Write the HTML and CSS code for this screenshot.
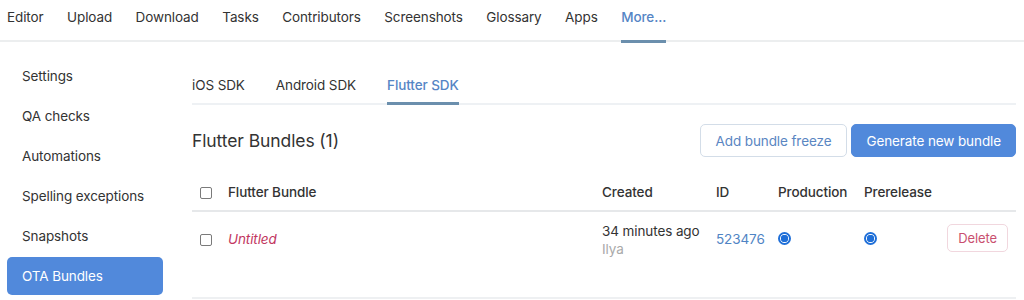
FILE: index.html
```html
<!doctype html>
<html lang="en">
  <head>
    <meta charset="UTF-8" />
    <meta name="viewport" content="width=device-width, initial-scale=1.0" />
    <title>OTA Bundles</title>
    <link rel="stylesheet" href="styles.css">
  </head>

  <body>
    <nav class="topnav">
      <a>Editor</a>
      <a>Upload</a>
      <a>Download</a>
      <a>Tasks</a>
      <a>Contributors</a>
      <a>Screenshots</a>
      <a>Glossary</a>
      <a>Apps</a>
      <a class="active">More...</a>
    </nav>

    <div class="layout">
      <aside class="sidebar">
        <a>Settings</a>
        <a>QA checks</a>
        <a>Automations</a>
        <a>Spelling exceptions</a>
        <a>Snapshots</a>
        <a class="active">OTA Bundles</a>
      </aside>

      <main class="content">
        <div class="tabs">
          <a>iOS SDK</a>
          <a>Android SDK</a>
          <a class="active">Flutter SDK</a>
        </div>

        <div class="page-head">
          <h2>Flutter Bundles (1)</h2>
          <div class="actions">
            <button class="btn btn-outline">Add bundle freeze</button>
            <button class="btn btn-primary">Generate new bundle</button>
          </div>
        </div>

        <table class="bundles">
          <colgroup>
            <col style="width: 36px">
            <col>
            <col style="width: 114px">
            <col style="width: 62px">
            <col style="width: 86px">
            <col style="width: 83px">
            <col style="width: 69px">
          </colgroup>
          <thead>
            <tr>
              <th><span class="check"></span></th>
              <th>Flutter Bundle</th>
              <th>Created</th>
              <th>ID</th>
              <th>Production</th>
              <th>Prerelease</th>
              <th></th>
            </tr>
          </thead>
          <tbody>
            <tr>
              <td><span class="check"></span></td>
              <td><span class="untitled">Untitled</span></td>
              <td class="created">
                <div>34 minutes ago</div>
                <div class="author">Ilya</div>
              </td>
              <td><a class="bundle-id">523476</a></td>
              <td><span class="radio"></span></td>
              <td><span class="radio"></span></td>
              <td class="row-actions"><button class="btn-delete">Delete</button></td>
            </tr>
          </tbody>
        </table>
      </main>
    </div>
  </body>
</html>
```

FILE: styles.css
```css
/* General styles */
body {
  margin: 0;
  padding: 0;
  background: #ffffff;
  color: #333333;
  font-family: 'Inter', 'Liberation Sans', sans-serif;
  font-size: 13.5px;
  letter-spacing: -0.1px;
  overflow: hidden;
}

a {
  cursor: pointer;
}

/* Top navigation */
.topnav {
  display: flex;
  gap: 23.5px;
  padding: 0 7px;
  height: 40px;
  border-bottom: 2px solid #eceeef;
}

.topnav a {
  display: block;
  padding-top: 7px;
  line-height: 20px;
  color: #333333;
  white-space: nowrap;
}

.topnav a.active {
  color: #5585c5;
  font-weight: 500;
  height: 33px;
  border-bottom: 3px solid #6b8fad;
  margin-bottom: -2px;
}

/* Layout */
.layout {
  display: flex;
  gap: 29px;
  padding-right: 8px;
}

.sidebar {
  width: 156px;
  flex: none;
  padding: 15px 0 0 7px;
  display: flex;
  flex-direction: column;
  gap: 2px;
}

.sidebar a {
  display: block;
  height: 38px;
  line-height: 38px;
  padding: 0 15px;
  border-radius: 5px;
  color: #333333;
  white-space: nowrap;
}

.sidebar a.active {
  background: #5189db;
  color: #ffffff;
}

.content {
  flex: 1;
}

/* Tabs */
.tabs {
  display: flex;
  gap: 31px;
  margin-top: 33px;
  border-bottom: 2px solid #eef1f4;
}

.tabs a {
  display: block;
  line-height: 20px;
  padding-bottom: 7px;
  color: #333333;
  border-bottom: 3px solid transparent;
  margin-bottom: -2px;
}

.tabs a.active {
  color: #5585c5;
  font-weight: 500;
  border-bottom-color: #6b8fad;
}

/* Page heading */
.page-head {
  display: flex;
  align-items: center;
  justify-content: space-between;
  margin-top: 19px;
}

.page-head h2 {
  margin: 0;
  font-size: 17.5px;
  font-weight: 400;
  color: #333333;
}

.actions {
  display: flex;
  gap: 4px;
}

.btn {
  height: 33px;
  padding: 0 14px;
  font-family: inherit;
  font-size: 13.5px;
  letter-spacing: -0.1px;
  border-radius: 5px;
  cursor: pointer;
}

.btn-outline {
  padding: 0 15px;
  background: #ffffff;
  border: 1px solid #d3dde8;
  color: #5a86c2;
}

.btn-primary {
  background: #5189db;
  border: 1px solid #5189db;
  color: #ffffff;
}

/* Table */
.bundles {
  width: 100%;
  margin-top: 17px;
  border-collapse: collapse;
  table-layout: fixed;
}

.bundles th {
  height: 36px;
  padding: 0;
  text-align: left;
  font-weight: 500;
  color: #333333;
  border-bottom: 2px solid #e6e8ea;
  vertical-align: middle;
}

.bundles tbody tr {
  height: 87px;
}

.bundles td {
  padding: 10px 0 0;
  vertical-align: top;
  border-bottom: 2px solid #eef0f2;
  line-height: 18px;
}

.bundles th:first-child,
.bundles td:first-child {
  padding-left: 8px;
}

.bundles tbody td:not(.created) {
  padding-top: 18px;
}

.check {
  display: block;
  width: 10px;
  height: 10px;
  border: 1.5px solid #7a7a7a;
  border-radius: 2px;
}

.bundles th .check {
  margin-top: 1px;
}

.bundles td .check {
  margin-top: 4px;
}

.untitled {
  font-style: italic;
  color: #c2375f;
}

.author {
  color: #a9a9a9;
}

.bundle-id {
  color: #4f84c4;
}

.radio {
  display: block;
  width: 9px;
  height: 9px;
  margin-top: 2px;
  border: 2px solid #1f6fd8;
  border-radius: 50%;
  background: radial-gradient(circle, #1f6fd8 0 3.5px, #ffffff 4px);
}

.row-actions {
  text-align: right;
}

.bundles tbody td.row-actions {
  padding-top: 12px;
  padding-right: 8px;
}

.btn-delete {
  height: 28px;
  padding: 0 10px;
  font-family: inherit;
  font-size: 13px;
  letter-spacing: -0.1px;
  background: #ffffff;
  color: #c9506f;
  border: 1px solid #f1d7de;
  border-radius: 5px;
  cursor: pointer;
}
```
